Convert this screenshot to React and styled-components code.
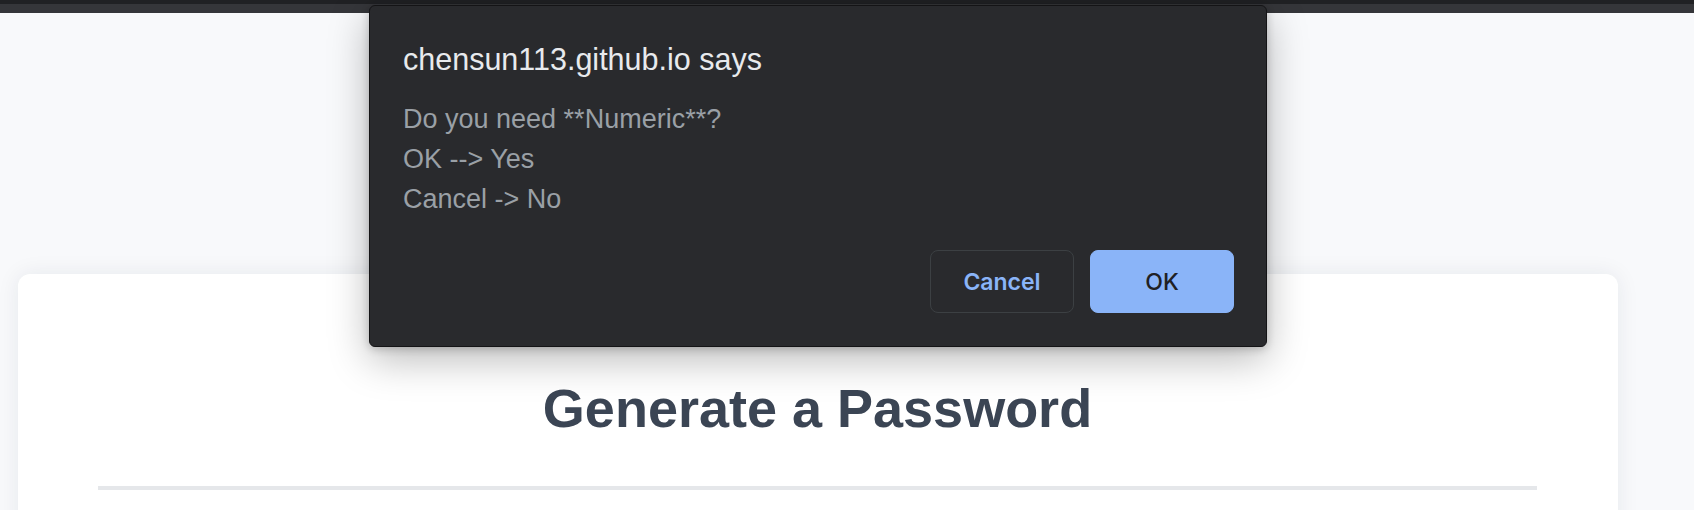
import React from "react";
import styled, { createGlobalStyle } from "styled-components";

const GlobalStyle = createGlobalStyle`
  html, body {
    margin: 0;
    padding: 0;
    background: #f8f9fb;
    font-family: "Liberation Sans", Arial, sans-serif;
  }
  * { box-sizing: border-box; }
`;

const Page = styled.div`
  position: relative;
  width: 1694px;
  height: 510px;
  overflow: hidden;
  background: #f8f9fb;
`;

const WindowFrame = styled.div`
  box-sizing: content-box;
  height: 4px;
  background: #202124;
  border-bottom: 9px solid #35363a;
`;

const Main = styled.main`
  padding: 261px 76px 0 18px;
`;

const Card = styled.section`
  background: #ffffff;
  border-radius: 12px;
  box-shadow: 0 0 22px rgba(30, 40, 60, 0.08);
  padding: 101px 81px 60px 80px;
  min-height: 400px;
`;

const Heading = styled.h1`
  margin: 0;
  text-align: center;
  font-family: "Liberation Sans", Arial, sans-serif;
  font-weight: 700;
  font-size: 54px;
  line-height: 67px;
  color: #3b4554;
`;

const Divider = styled.hr`
  margin: 44px 0 0;
  border: none;
  height: 4px;
  background: #e5e7ea;
`;

const Dialog = styled.div`
  position: absolute;
  left: 369px;
  top: 5px;
  width: 898px;
  height: 342px;
  background: #292a2d;
  border: 1px solid #141416;
  border-radius: 6px;
  box-shadow: 0 12px 40px rgba(0, 0, 0, 0.28), 0 2px 8px rgba(0, 0, 0, 0.2);
  padding: 35px 32px 33px 33px;
  display: flex;
  flex-direction: column;
`;

const Title = styled.div`
  font-family: "Liberation Sans", Arial, sans-serif;
  font-size: 30.5px;
  line-height: 37px;
  color: #e8eaed;
`;

const Message = styled.div`
  margin-top: 21px;
  font-family: "Liberation Sans", Arial, sans-serif;
  font-size: 27px;
  line-height: 40px;
  color: #9aa0a6;
`;

const Actions = styled.div`
  margin-top: auto;
  display: flex;
  justify-content: flex-end;
  gap: 16px;
`;

const Button = styled.button`
  width: 144px;
  height: 63px;
  border-radius: 8px;
  font-family: Inter, "Liberation Sans", sans-serif;
  font-weight: 500;
  font-size: 23px;
  cursor: pointer;
  border: 1px solid ${(p) => (p.$primary ? "#8ab4f8" : "#3c4043")};
  background: ${(p) => (p.$primary ? "#8ab4f8" : "transparent")};
  color: ${(p) => (p.$primary ? "#202124" : "#8ab4f8")};
  font-weight: ${(p) => (p.$primary ? 500 : 600)};
`;

export default function App() {
  return (
    <Page>
      <GlobalStyle />
      <WindowFrame />
      <Main>
        <Card>
          <Heading>Generate a Password</Heading>
          <Divider />
        </Card>
      </Main>
      <Dialog role="dialog">
        <Title>chensun113.github.io says</Title>
        <Message>
          <div>Do you need **Numeric**?</div>
          <div>OK --&gt; Yes</div>
          <div>Cancel -&gt; No</div>
        </Message>
        <Actions>
          <Button>Cancel</Button>
          <Button $primary>OK</Button>
        </Actions>
      </Dialog>
    </Page>
  );
}
